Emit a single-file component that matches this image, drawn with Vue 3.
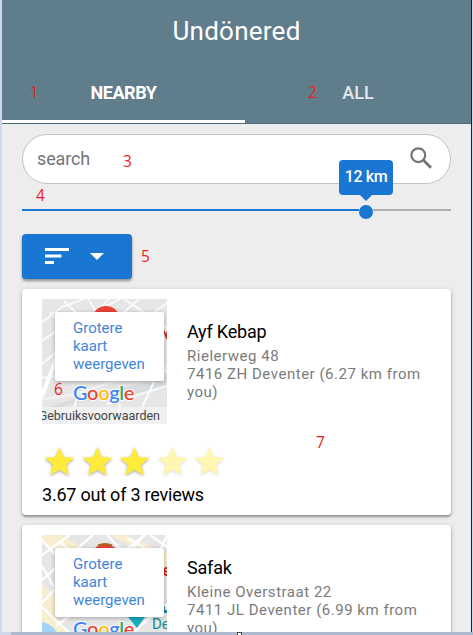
<script setup>
const tabs = [
  { label: 'NEARBY', active: true },
  { label: 'ALL', active: false },
]
const places = [
  { name: 'Ayf Kebap', street: 'Rielerweg 48', city: '7416 ZH Deventer (6.27 km from you)', stars: 3, score: '3.67 out of 3 reviews', map: 'a' },
  { name: 'Safak', street: 'Kleine Overstraat 22', city: '7411 JL Deventer (6.99 km from you)', stars: 0, score: '', map: 'b' },
]
const logo = ['G', 'o', 'o', 'g', 'l', 'e']
const star = 'M14.5 0l4.2 9.9 10.6.9-8.1 7 2.5 10.4-9.2-5.5-9.2 5.5 2.5-10.4-8.1-7 10.6-.9z'
</script>

<template>
  <div class="screen">
    <main class="app">
      <header class="bar">
        <h1>Undönered</h1>
        <nav class="tabs">
          <div v-for="t in tabs" :key="t.label" class="tab" :class="{ active: t.active }">{{ t.label }}</div>
        </nav>
      </header>
      <section class="body">
        <div class="search">
          <span>search</span>
          <svg width="22" height="22" viewBox="0 0 22 22" fill="none" stroke="#757575">
            <circle cx="8.3" cy="8.2" r="6.9" stroke-width="2.2" />
            <path d="M13.2 13.1L21 20.8" stroke-width="2.8" />
          </svg>
        </div>
        <div class="slider">
          <div class="fill"></div>
          <div class="thumb"><div class="tip">12 km</div></div>
          <div class="rest"></div>
        </div>
        <button class="sort">
          <svg width="24" height="16" viewBox="0 0 24 16" fill="#fff"><path d="M0 0h24v3H0zM0 6.5h16.500v3H0zM0 13h9v3H0z" /></svg>
          <svg width="14" height="7" viewBox="0 0 14 7" fill="#fff"><path d="M0 0h14L7 7z" /></svg>
        </button>
        <article v-for="p in places" :key="p.name" class="card">
          <div class="row">
            <div class="map">
              <svg v-if="p.map === 'a'" class="ground" width="125" height="125" viewBox="0 0 125 125" fill="none">
                <rect width="125" height="125" fill="#e6e6e6" />
                <path d="M0 110Q25 101 60 94T125 76V88Q90 98 55 101T0 119z" fill="#d8dcde" />
                <path d="M0 116l18-4 14 13H0z" fill="#d7e8f6" />
                <g stroke="#fafafa" stroke-width="2">
                  <path d="M0 23L20 8 42 0M0 42L25 24M8 13L43 57M22 2l28 27M46 0l8 12 24-12M67 0l-15 15M82 0l43 29M97 0L81 14M107 17l18-13M0 65l18-15M0 79l20-3M108 81l17-10M112 83l-16 34M65 105l60-18M36 96l-9 29M78 105l-3 20" />
                </g>
                <path d="M0 97l18-47" stroke="#fff" stroke-width="4" />
                <path d="M0 100Q30 98 58 87T125 68" stroke="#f0f1f1" stroke-width="2.500" />
                <circle cx="64" cy="21" r="14" fill="#e94435" />
                <path d="M122 32l3 8v-7" stroke="#c5221f" stroke-width="1.5" />
              </svg>
              <svg v-else class="ground" width="125" height="125" viewBox="0 0 125 125" fill="none">
                <rect width="125" height="125" fill="#e6e6e6" />
                <path d="M0 0h18l34 18H27L0 9zM68 0h15l42 18v20H112L98 15zM0 49l15 13v45L0 85zM0 77l30 20H10z" fill="#f8edcf" />
                <path d="M0 87Q11 88 18 103H0z" fill="#a3d4f7" />
                <g stroke="#fff" stroke-width="2.300">
                  <path d="M0 20L28 0M0 45L42 8M0 5l20 22 31-27M17 7l36 25M65 0l16 17 22-17M85 3l31 17 9-20M102 0L88 17M0 68l17-18M0 72l42 40M12 52L0 31M14 91l16-12M105 85l20-15M108 0l17 12M90 99l18-17" />
                </g>
                <circle cx="63" cy="23" r="14" fill="#e94435" />
                <path d="M56 10.500q7-3 14 0" stroke="#a8651c" stroke-width="2" />
                <path d="M86 82h17l-8 11z" fill="#18adc0" />
                <path d="M122 71v5h3M125 77h-4" stroke="#008493" stroke-width="1.500" />
                <path d="M125 33a3.500 3.500 0 1 0 0 7M121 36.500h4" stroke="#c5221f" stroke-width="2" />
              </svg>
              <span v-if="p.map === 'b'" class="town">De</span>
              <div class="link">Grotere<br />kaart<br />weergeven</div>
              <div class="google"><span v-for="(c, i) in logo" :key="i" :class="'g' + i">{{ c }}</span></div>
              <div v-if="p.map === 'a'" class="terms">Gebruiksvoorwaarden</div>
            </div>
            <div class="info">
              <h2>{{ p.name }}</h2>
              <p>{{ p.street }}<br />{{ p.city }}</p>
            </div>
          </div>
          <div v-if="p.score" class="stars">
            <svg v-for="n in 5" :key="n" :class="{ dim: n > p.stars }" width="29" height="29" viewBox="0 0 29 29"><path :d="star" fill="#ffeb3b" /></svg>
          </div>
          <div v-if="p.score" class="score">{{ p.score }}</div>
        </article>
      </section>
    </main>
    <div class="floor"><i></i></div>
    <b v-for="n in 7" :key="n" class="note" :class="'n' + n">{{ n }}</b>
  </div>
</template>

<style>
body { margin: 0; overflow: hidden; }
</style>
<style scoped>
* { box-sizing: border-box; }
.screen { position: relative; width: 473px; height: 635px; overflow: hidden; background: #cdd8ea; font-family: Roboto, sans-serif; padding-left: 2px; }
.app { width: 470px; height: 632px; overflow: hidden; background: #ededed; border-right: 1px solid #222; }
.bar { height: 124px; background: #607d8b; border-bottom: 1px solid #4d6974; color: #fff; }
h1 { margin: 0; height: 62px; line-height: 62px; font-size: 26px; font-weight: 400; text-align: center; letter-spacing: .25px; }
.tabs { display: grid; grid-template-columns: 243px 1fr; height: 61px; }
.tab { line-height: 62px; height: 61px; text-align: center; font-size: 18px; font-weight: 500; color: #e0e6e9; }
.tab.active { color: #fff; border-bottom: 3px solid #fff; font-weight: 700; letter-spacing: -.4px; }
.body { padding: 10px 20px 0; }
.search { height: 50px; border: 1px solid #c3c3c3; border-radius: 25px; background: #fff; display: flex; align-items: center; justify-content: space-between; padding: 0 18px 0 14px; font-size: 18px; letter-spacing: -.15px; color: #757575; }
.search span { margin-top: -1px; }
.search svg { margin-top: -2px; }
.slider { display: flex; align-items: center; height: 14px; margin-top: 20px; }
.fill { width: 336.500px; height: 2px; margin-bottom: 2px; background: #1976d2; }
.thumb { position: relative; width: 14px; height: 14px; border-radius: 50%; background: #1976d2; margin-top: 1px; }
.rest { flex: 1; height: 2px; margin-bottom: 2px; background: #b0b0b0; }
.tip { position: absolute; left: -19.500px; bottom: 24px; width: 54px; height: 35px; border-radius: 4px; background: #1976d2; color: #fff; font-size: 16px; font-weight: 500; letter-spacing: -.4px; line-height: 34px; text-align: center; }
.tip::after { content: ''; position: absolute; left: 20px; top: 34px; border: 7px solid transparent; border-top-color: #1976d2; border-bottom: 0; }
.sort { display: flex; align-items: center; gap: 21px; width: 110px; height: 45px; margin: 16px 0 10px; padding: 0 23px; border: 0; border-radius: 4px; background: #1976d2; box-shadow: 0 2px 3px rgba(0,0,0,.4); }
.sort svg:first-child { margin-top: -2px; }
.card { height: 226px; margin-bottom: 10px; padding: 10px 20px; border-radius: 4px; background: #fff; box-shadow: 0 2px 2px rgba(0,0,0,.3), 0 1px 5px rgba(0,0,0,.18); }
.row { display: flex; gap: 20px; }
.map { position: relative; flex: none; width: 125px; height: 125px; overflow: hidden; }
.ground { display: block; }
.link { position: absolute; left: 13px; top: 13px; width: 109px; height: 69px; padding: 7px 0 0 18px; border-radius: 2px; background: #fff; color: #4285d8; font-size: 15px; line-height: 18px; box-shadow: 0 1px 4px rgba(0,0,0,.3); }
.google { position: absolute; left: 31px; top: 81px; font: 600 20px/24px Lato, sans-serif; letter-spacing: -.35px; -webkit-text-stroke: 2px #fff; paint-order: stroke fill; white-space: nowrap; }
.g0, .g3 { color: #4285f4; }
.g1, .g5 { color: #ea4335; }
.g2 { color: #fbbc05; }
.g4 { color: #34a853; }
.terms { position: absolute; right: 0; bottom: 0; padding-right: 7px; height: 17px; line-height: 17px; font-size: 12.500px; color: #444; background: rgba(245,245,245,.7); }
.town { position: absolute; left: 110px; top: 80px; font-size: 15px; color: #188a91; }
.info { padding-top: 22px; }
h2 { margin: 0; font-size: 18px; line-height: 21px; font-weight: 400; letter-spacing: -.2px; color: #000; }
p { margin: 5px 0 0; font-size: 15px; line-height: 18px; letter-spacing: .52px; color: #7b7b7b; }
.stars { display: flex; gap: 8.500px; margin: 23px 0 0 3px; height: 29px; }
.stars svg { overflow: visible; filter: drop-shadow(0 1px 1.500px rgba(0,0,0,.35)); }
.stars .dim { opacity: .4; }
.score { margin-top: 8px; font-size: 18px; line-height: 21px; letter-spacing: -.22px; color: #000; }
.floor { height: 3px; padding-right: 5px; margin-left: 9px; background: #adb9cf; display: flex; justify-content: center; }
.floor i { width: 5px; height: 3px; border: 1px solid #444; border-bottom: 0; background: #fff; }
.note { position: absolute; font: 400 15.500px/20px "Open Sans", sans-serif; color: #ed1c24; }
.n1 { left: 30px; top: 82px; }
.n2 { left: 308px; top: 82px; }
.n3 { left: 123px; top: 151px; }
.n4 { left: 36px; top: 185px; }
.n5 { left: 141px; top: 246px; }
.n6 { left: 54px; top: 379px; }
.n7 { left: 316px; top: 432px; }
</style>
